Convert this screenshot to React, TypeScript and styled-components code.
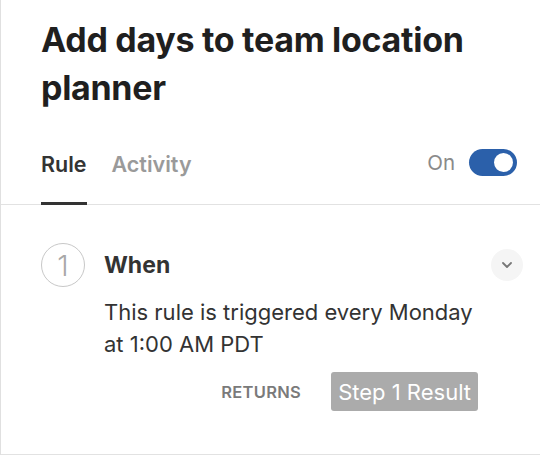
import styled, { createGlobalStyle } from "styled-components";

const GlobalStyle = createGlobalStyle`
  body {
    margin: 0;
    background: #ffffff;
    font-family: "Inter", "Roboto", "Liberation Sans", sans-serif;
  }
`;

const Panel = styled.div`
  width: 540px;
  box-sizing: border-box;
  border-left: 1px solid #e0e0e0;
`;

const Header = styled.div`
  padding: 16px 23px 0 40px;
  border-bottom: 1px solid #e2e2e2;
`;

const Title = styled.h1`
  margin: 0;
  font-size: 34px;
  line-height: 48px;
  font-weight: 700;
  color: #1f1f1f;
  letter-spacing: -0.3px;
`;

const TabRow = styled.div`
  display: flex;
  align-items: flex-start;
  margin-top: 40px;
`;

const Tab = styled.div<{ $active?: boolean }>`
  font-size: 21.5px;
  line-height: 25px;
  font-weight: 600;
  color: ${(p) => (p.$active ? "#333333" : "#9a9a9a")};
  padding-bottom: 25px;
  border-bottom: 3px solid ${(p) => (p.$active ? "#333333" : "transparent")};
  margin-right: 25px;
  margin-bottom: -1px;
`;

const ToggleGroup = styled.div`
  margin-left: auto;
  margin-top: -3px;
  display: flex;
  align-items: center;
  gap: 14px;
`;

const ToggleLabel = styled.span`
  font-size: 20.5px;
  color: #8a8a8a;
`;

const Switch = styled.div<{ $on: boolean }>`
  width: 48px;
  height: 27px;
  border-radius: 14px;
  background: ${(p) => (p.$on ? "#2b60aa" : "#cccccc")};
  position: relative;

  &::after {
    content: "";
    position: absolute;
    top: 4px;
    left: ${(p) => (p.$on ? "25px" : "4px")};
    width: 19px;
    height: 19px;
    border-radius: 50%;
    background: #ffffff;
  }
`;

const Step = styled.div`
  padding: 38px 17px 43px 40px;
  border-bottom: 1px solid #e2e2e2;
`;

const StepHead = styled.div`
  display: flex;
  align-items: center;
`;

const StepNumber = styled.div`
  width: 44px;
  height: 44px;
  box-sizing: border-box;
  border: 1px solid #c8c8c8;
  border-radius: 50%;
  display: flex;
  align-items: center;
  justify-content: center;
  font-size: 29px;
  font-weight: 300;
  color: #a8a8a8;
`;

const StepTitle = styled.div`
  margin-left: 19px;
  font-size: 23px;
  line-height: 26px;
  font-weight: 700;
  color: #333333;
`;

const Collapse = styled.button`
  margin-left: auto;
  width: 32px;
  height: 32px;
  border: none;
  border-radius: 50%;
  background: #f5f5f5;
  display: flex;
  align-items: center;
  justify-content: center;
  padding: 0;
`;

const StepBody = styled.div`
  padding-left: 63px;
  padding-right: 40px;
`;

const Description = styled.p`
  margin: 9px 0 0;
  font-size: 22px;
  line-height: 32px;
  color: #333333;
`;

const ReturnsRow = styled.div`
  display: flex;
  justify-content: flex-end;
  align-items: center;
  gap: 30px;
  margin-top: 12px;
  padding-right: 5px;
`;

const ReturnsLabel = styled.span`
  font-size: 16.5px;
  font-weight: 600;
  letter-spacing: 0.3px;
  color: #7a7a7a;
`;

const ResultBadge = styled.span`
  height: 39px;
  display: flex;
  align-items: center;
  padding: 0 7px;
  border-radius: 3px;
  background: #ababab;
  color: #ffffff;
  font-size: 22px;
`;

export default function App() {
  return (
    <>
      <GlobalStyle />
      <Panel>
        <Header>
          <Title>Add days to team location planner</Title>
          <TabRow>
            <Tab $active>Rule</Tab>
            <Tab>Activity</Tab>
            <ToggleGroup>
              <ToggleLabel>On</ToggleLabel>
              <Switch $on />
            </ToggleGroup>
          </TabRow>
        </Header>
        <Step>
          <StepHead>
            <StepNumber>1</StepNumber>
            <StepTitle>When</StepTitle>
            <Collapse aria-label="Collapse">
              <svg width="12" height="8" viewBox="0 0 12 8" fill="none">
                <path
                  d="M2 2l4 4 4-4"
                  stroke="#777777"
                  strokeWidth="1.8"
                  strokeLinecap="round"
                  strokeLinejoin="round"
                />
              </svg>
            </Collapse>
          </StepHead>
          <StepBody>
            <Description>
              This rule is triggered every Monday at 1:00 AM PDT
            </Description>
            <ReturnsRow>
              <ReturnsLabel>RETURNS</ReturnsLabel>
              <ResultBadge>Step 1 Result</ResultBadge>
            </ReturnsRow>
          </StepBody>
        </Step>
      </Panel>
    </>
  );
}
